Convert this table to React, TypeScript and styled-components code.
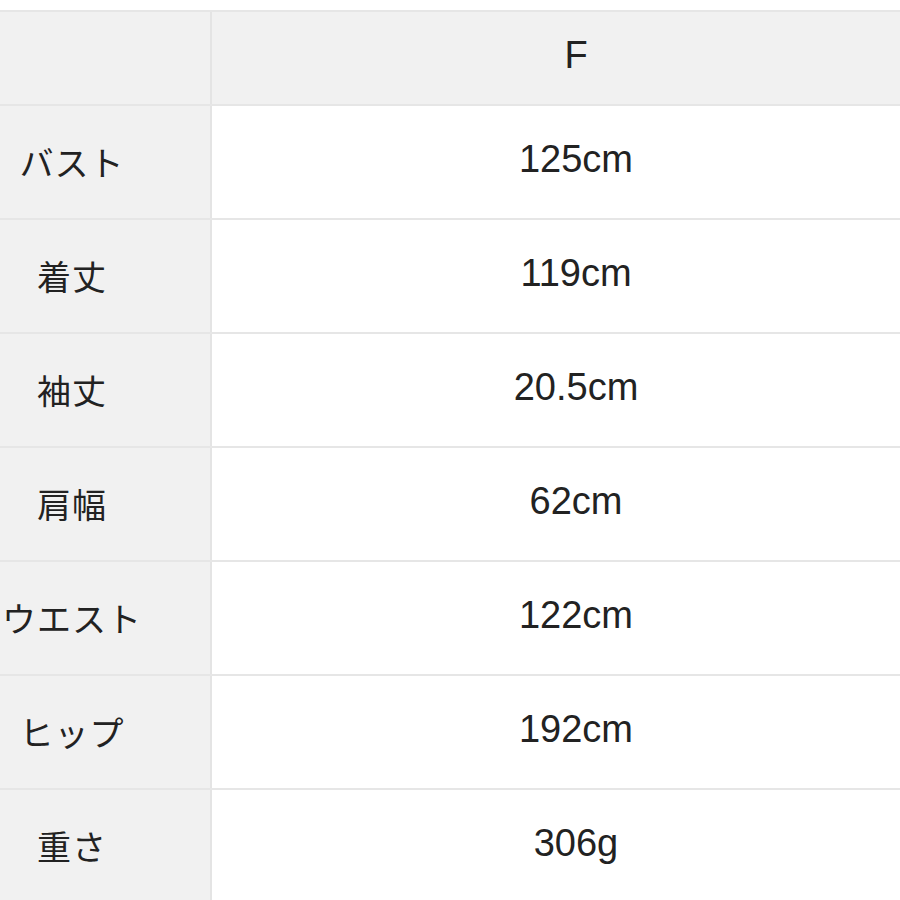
import React from 'react'
import styled, { createGlobalStyle } from 'styled-components'

const GlobalStyle = createGlobalStyle`
  html, body {
    margin: 0;
    padding: 0;
    background: #fff;
    overflow: hidden;
  }
  body {
    font-family: "Liberation Sans", "Noto Sans CJK JP", sans-serif;
    color: #222;
  }
`

const Page = styled.div`
  width: 900px;
  height: 900px;
  padding-top: 10px;
  box-sizing: border-box;
  overflow: hidden;
`

const Table = styled.div`
  margin-left: -66px;
  width: 1006px;
  border-top: 2px solid #e6e6e6;
`

const Row = styled.div<{ $head?: boolean }>`
  display: grid;
  grid-template-columns: 278px 728px;
  height: ${({ $head }) => ($head ? '92px' : '112px')};
  border-bottom: 2px solid #e6e6e6;
  background: ${({ $head }) => ($head ? '#f1f1f1' : '#fff')};
`

const Label = styled.div`
  display: flex;
  align-items: center;
  justify-content: center;
  background: #f1f1f1;
  border-right: 2px solid #e4e4e4;
  font-family: "Noto Sans CJK JP", sans-serif;
  font-size: 34px;
  font-weight: 400;
  letter-spacing: 1px;
  padding-bottom: 2px;
`

const Value = styled.div`
  display: flex;
  align-items: center;
  justify-content: center;
  font-family: "Liberation Sans", sans-serif;
  font-size: 38px;
  padding-bottom: 6px;
`

const rows: [string, string][] = [
  ['バスト', '125cm'],
  ['着丈', '119cm'],
  ['袖丈', '20.5cm'],
  ['肩幅', '62cm'],
  ['ウエスト', '122cm'],
  ['ヒップ', '192cm'],
  ['重さ', '306g'],
]

const App: React.FC = () => (
  <Page>
    <GlobalStyle />
    <Table>
      <Row $head>
        <Label />
        <Value>F</Value>
      </Row>
      {rows.map(([label, value]) => (
        <Row key={label}>
          <Label>{label}</Label>
          <Value>{value}</Value>
        </Row>
      ))}
    </Table>
  </Page>
)

export default App
